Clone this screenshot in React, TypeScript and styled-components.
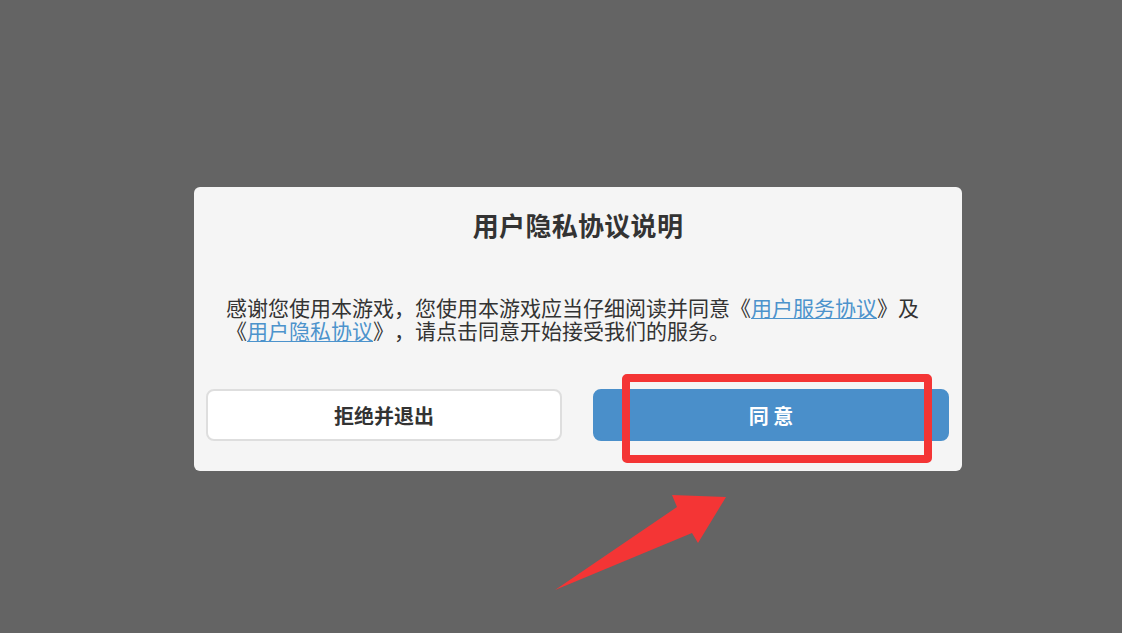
import React from 'react';
import styled, { createGlobalStyle } from 'styled-components';

const GlobalStyle = createGlobalStyle`
    html, body {
        margin: 0;
        padding: 0;
        background: #646464;
        font-family: "Noto Sans CJK SC", "Noto Sans", sans-serif;
        text-spacing-trim: space-all;
    }
`;

const Page = styled.div`
    position: relative;
    width: 1122px;
    height: 633px;
    padding: 187px 0 0 194px;
    box-sizing: border-box;
    overflow: hidden;
`;

const Dialog = styled.div`
    position: relative;
    width: 768px;
    height: 284px;
    box-sizing: border-box;
    background: #f5f5f5;
    border-radius: 6px;
    display: flex;
    flex-direction: column;
`;

const Title = styled.h2`
    margin: 0;
    padding-top: 20px;
    font-size: 26px;
    line-height: 36px;
    font-weight: 700;
    color: #333;
    text-align: center;
    letter-spacing: 0.3px;
`;

const Content = styled.p`
    margin: 53px 0 0 0;
    padding: 0 32px;
    font-size: 21px;
    line-height: 23px;
    color: #333;
`;

const Link = styled.a`
    color: #4c93cc;
    text-decoration: underline;
    text-underline-offset: 2px;
    text-decoration-thickness: 1px;
`;

const Actions = styled.div`
    margin-top: auto;
    padding: 0 13px 30px 12px;
    display: flex;
    gap: 31px;
`;

const Button = styled.button<{ $primary?: boolean }>`
    flex: 1;
    height: 52px;
    border-radius: 8px;
    border: 2px solid ${p => (p.$primary ? '#4a8fca' : '#dedede')};
    background: ${p => (p.$primary ? '#4a8fca' : '#ffffff')};
    color: ${p => (p.$primary ? '#ffffff' : '#333333')};
    font-family: inherit;
    font-size: 20px;
    font-weight: 700;
    cursor: pointer;
`;

const Highlight = styled.div`
    position: absolute;
    left: 428px;
    top: 187px;
    width: 310px;
    height: 89px;
    box-sizing: border-box;
    border: 8px solid #f43535;
    border-radius: 5px;
    pointer-events: none;
`;

const Arrow = styled.svg`
    position: absolute;
    left: 540px;
    top: 485px;
`;

const App = () => {
    return (
        <>
            <GlobalStyle />
            <Page>
                <Dialog>
                    <Title>用户隐私协议说明</Title>
                    <Content>
                        感谢您使用本游戏，您使用本游戏应当仔细阅读并同意《<Link>用户服务协议</Link>》及《<Link>用户隐私协议</Link>》，请点击同意开始接受我们的服务。
                    </Content>
                    <Actions>
                        <Button>拒绝并退出</Button>
                        <Button $primary>同 意</Button>
                    </Actions>
                    <Highlight />
                </Dialog>
                <Arrow width="200" height="115" viewBox="540 485 200 115">
                    <polygon points="555,590 677,507 672,495 726,497 698,543 692,533" fill="#f43535" />
                </Arrow>
            </Page>
        </>
    );
};

export default App;
